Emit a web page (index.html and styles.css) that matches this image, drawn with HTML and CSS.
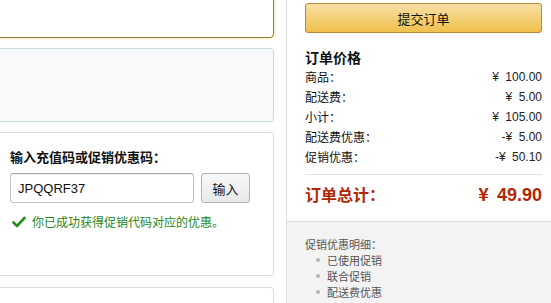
FILE: index.html
```html
<!DOCTYPE html>
<html lang="zh-CN">
<head>
<meta charset="utf-8">
<title>订单</title>
<link rel="stylesheet" href="styles.css">
</head>
<body>
<div class="page">
  <div class="main">
    <div class="box box-selected"></div>
    <div class="box box-info"></div>
    <div class="box box-code">
      <div class="code-title">输入充值码或促销优惠码：</div>
      <div class="code-row">
        <input class="code-input" type="text" value="JPQQRF37">
        <button class="code-btn" type="button">输入</button>
      </div>
      <div class="code-ok">
        <svg class="check" width="14" height="12" viewBox="0 0 14 12"><path d="M1.5 6.5 L5 10 L12.5 1.8" fill="none" stroke="#2b8a1e" stroke-width="2.6" stroke-linecap="round" stroke-linejoin="round"/></svg>
        <span>你已成功获得促销代码对应的优惠。</span>
      </div>
    </div>
    <div class="box box-next"></div>
  </div>
  <aside class="side">
    <div class="summary">
      <button class="submit" type="button">提交订单</button>
      <div class="sum-title">订单价格</div>
      <div class="row"><span>商品：</span><span><span class="yen">¥</span> 100.00</span></div>
      <div class="row"><span>配送费：</span><span><span class="yen">¥</span> 5.00</span></div>
      <div class="row"><span>小计：</span><span><span class="yen">¥</span> 105.00</span></div>
      <div class="row"><span>配送费优惠：</span><span>-<span class="yen">¥</span> 5.00</span></div>
      <div class="row"><span>促销优惠：</span><span>-<span class="yen">¥</span> 50.10</span></div>
      <div class="total"><span>订单总计：</span><span class="total-num"><span class="yen">¥</span> 49.90</span></div>
    </div>
    <div class="details">
      <div class="details-title">促销优惠明细：</div>
      <ul class="details-list">
        <li>已使用促销</li>
        <li>联合促销</li>
        <li>配送费优惠</li>
      </ul>
    </div>
  </aside>
</div>
</body>
</html>
```

FILE: styles.css
```css
html, body {
  margin: 0;
  padding: 0;
  overflow: hidden;
  background: #fff;
  height: 303px;
}
body {
  font-family: "Liberation Sans", "Noto Sans CJK SC", sans-serif;
  font-size: 12px;
  color: #111;
}
.page {
  display: flex;
  margin-left: -8px;
  gap: 12px;
  height: 303px;
}
.main {
  width: 282px;
  flex: none;
  display: flex;
  flex-direction: column;
}
.box {
  box-sizing: border-box;
  border: 1px solid #ddd;
  border-radius: 4px;
  background: #fff;
  flex: none;
}
.box-selected {
  margin-top: -30px;
  height: 68px;
  border-color: #8f7a25;
  box-shadow: 0 0 3px 1px #fbefc4;
}
.box-info {
  margin-top: 10px;
  height: 74px;
  border-color: #c9d7e1;
  background: #f8f9fa;
}
.box-code {
  margin-top: 10px;
  height: 144px;
  padding: 15px 18px 0 17px;
}
.box-next {
  margin-top: 11px;
  height: 16px;
  border-bottom: none;
  border-radius: 4px 4px 0 0;
}
.code-title {
  font-family: "Noto Sans CJK SC", sans-serif;
  font-weight: bold;
  font-size: 13px;
  line-height: 18px;
  color: #111;
}
.code-row {
  display: flex;
  gap: 7px;
  margin-top: 7px;
}
.code-input {
  box-sizing: border-box;
  width: 184px;
  height: 30px;
  border: 1px solid #c3c3c3;
  border-top-color: #a6a6a6;
  border-radius: 3px;
  padding: 0 7px;
  font-family: "Liberation Sans", sans-serif;
  font-size: 13px;
  color: #111;
  box-shadow: inset 0 1px 1px rgba(0,0,0,0.06);
  outline: none;
}
.code-btn {
  box-sizing: border-box;
  width: 49px;
  height: 30px;
  border: 1px solid #adb1b8;
  border-radius: 3px;
  background: linear-gradient(#f7f8fa, #e7e9ec);
  font-family: "Noto Sans CJK SC", sans-serif;
  font-size: 13px;
  color: #111;
  padding: 0;
}
.code-ok {
  display: flex;
  align-items: center;
  gap: 6px;
  margin-top: 10px;
  line-height: 18px;
  color: #24871b;
  font-family: "Noto Sans CJK SC", sans-serif;
  font-size: 12px;
}
.check {
  margin-left: 2px;
  flex: none;
}
.side {
  flex: 1;
  display: flex;
  flex-direction: column;
  border-left: 1px solid #dcdcdc;
}
.summary {
  padding: 3px 9px 14px 18px;
  border-bottom: 1px solid #dcdcdc;
  font-family: "Noto Sans CJK SC", sans-serif;
}
.submit {
  display: block;
  box-sizing: border-box;
  width: 100%;
  height: 30px;
  border: 1px solid #b08d35;
  border-radius: 3px;
  background: linear-gradient(#f7dfa5, #f0c14b);
  font-family: "Noto Sans CJK SC", sans-serif;
  font-size: 13px;
  color: #111;
  padding: 0;
}
.sum-title {
  margin-top: 14px;
  font-size: 14px;
  font-weight: bold;
  line-height: 20px;
}
.row {
  display: flex;
  justify-content: space-between;
  line-height: 20px;
  font-size: 12px;
}
.row span:last-child {
  font-family: "Liberation Sans", sans-serif;
  color: #222;
}
.yen {
  font-family: "Noto Sans CJK SC", sans-serif;
  margin-right: 3px;
}
.total {
  display: flex;
  justify-content: space-between;
  align-items: center;
  margin-top: 7px;
  padding-top: 6px;
  border-top: 1px solid #e3e3e3;
  line-height: 24px;
  color: #b12704;
  font-weight: bold;
  font-size: 16px;
}
.total-num {
  font-family: "Liberation Sans", sans-serif;
  font-size: 18px;
}
.details {
  flex: 1;
  background: #f3f3f3;
  padding: 14px 9px 0 18px;
  font-family: "Noto Sans CJK SC", sans-serif;
  font-size: 11px;
  color: #555;
  line-height: 16px;
}
.details-list {
  list-style: none;
  margin: 0;
  padding: 0 0 0 10px;
}
.details-list li {
  position: relative;
  padding-left: 12px;
}
.details-list li::before {
  content: "";
  position: absolute;
  left: 1px;
  top: 6px;
  width: 4px;
  height: 4px;
  border-radius: 50%;
  background: #b5b5b5;
}
```
